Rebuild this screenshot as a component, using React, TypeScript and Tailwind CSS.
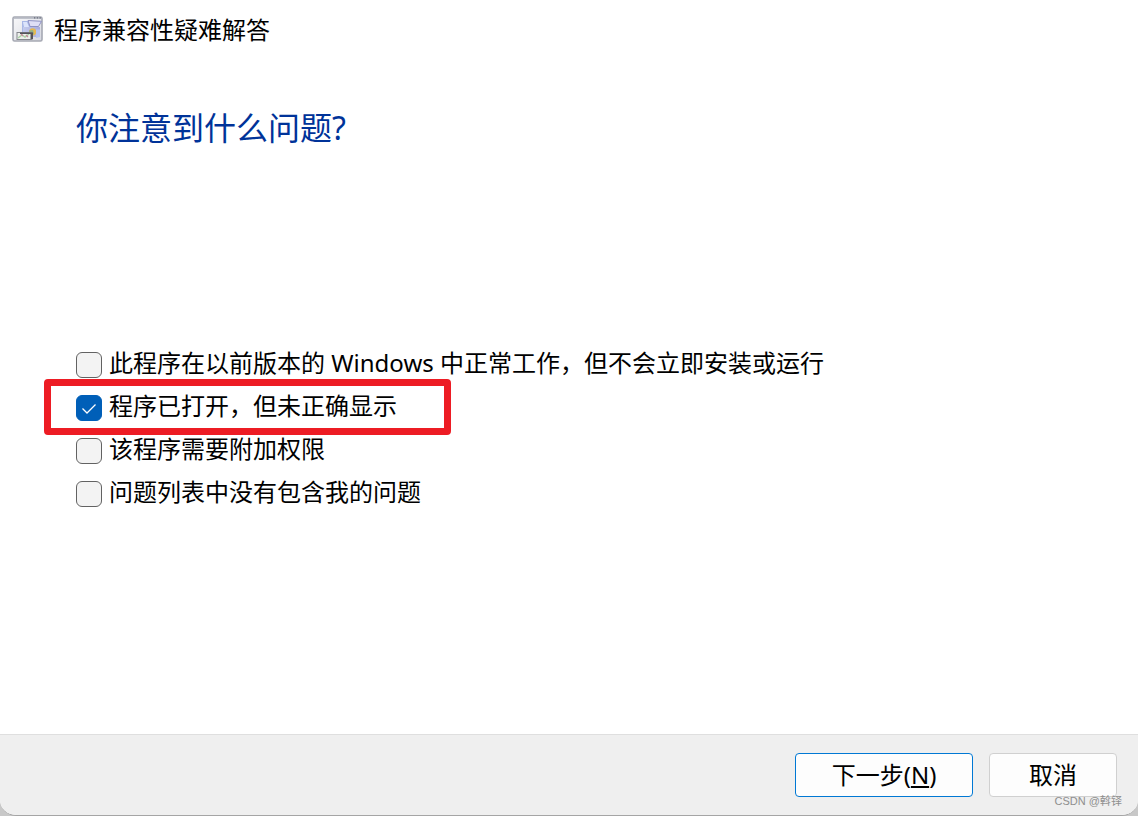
import { useState } from "react";

const PROBLEMS = [
  "此程序在以前版本的 Windows 中正常工作，但不会立即安装或运行",
  "程序已打开，但未正确显示",
  "该程序需要附加权限",
  "问题列表中没有包含我的问题",
];

function ProgramIcon() {
  return (
    <svg width="32" height="28" viewBox="0 0 32 28" aria-hidden="true" className="shrink-0">
      <defs>
        <linearGradient id="panel" x1="0" y1="0" x2="1" y2="1">
          <stop offset="0" stopColor="#f8f8fa" />
          <stop offset="1" stopColor="#d6d8e0" />
        </linearGradient>
        <linearGradient id="box" x1="0" y1="0" x2="1" y2="0">
          <stop offset="0" stopColor="#c3cbec" />
          <stop offset="1" stopColor="#a9acdd" />
        </linearGradient>
      </defs>
      <rect x="1" y="1" width="29" height="24" rx="1.5" fill="url(#panel)" stroke="#a6a9b3" strokeWidth="1.6" />
      <path d="M2 2h27" stroke="#b3b6c1" strokeWidth="1.6" />
      <path d="M22 1.8h1.3M24.800 1.8h1.3M27.500 1.8h1.3" stroke="#666a79" strokeWidth="1.2" />
      <path d="M10 5l8 0 2 6-8 0v8l-2-2z" fill="#a9b8e6" />
      <path d="M11 6l4 0 2 5-5 0z" fill="#dce4fb" />
      <path d="M11 11h17v10H11z" fill="url(#box)" />
      <path d="M16 4.500l13.500 .8-3 5.200H18z" fill="#dfdff6" stroke="#9093c4" strokeWidth="1" />
      <circle cx="20.700" cy="15.800" r="3.600" fill="#e5b952" />
      <path d="M17 14.500l4-.5 1 4-4 1z" fill="#92b189" />
      <path d="M24 13.500h4V21l-4 1z" fill="#b7c4ef" />
      <rect x="5" y="16.500" width="15" height="7" fill="#edf0ec" stroke="#85878d" strokeWidth="1" />
      <path d="M6 22l4-3 3 2 4-3" fill="none" stroke="#acd2a6" strokeWidth="1.500" />
      <path d="M9 18l2 2M14 19l2 2" stroke="#c8899b" strokeWidth="1.200" />
      <path d="M8 16.500h13V23h-2.500v-5H8z" fill="#55545a" />
    </svg>
  );
}

export default function App() {
  const [checked, setChecked] = useState([false, true, false, false]);
  const toggle = (index: number) =>
    setChecked((values) => values.map((value, i) => (i === index ? !value : value)));

  return (
    <div className="min-h-screen bg-[#c8c8c8] font-['Noto_Sans','Noto_Sans_CJK_SC',sans-serif] text-2xl text-black">
      <form
        className="flex min-h-screen flex-col overflow-hidden rounded-b-2xl border-b border-[#a5a5a5] bg-white"
        onSubmit={(event) => event.preventDefault()}
      >
        <header className="flex items-center gap-2.5 px-3 pt-3">
          <ProgramIcon />
          <span className="leading-9">程序兼容性疑难解答</span>
        </header>

        <main className="flex-1 px-[76px] pt-14">
          <h1 id="question" className="text-[32px] leading-12 text-[#003399]">你注意到什么问题?</h1>
          <fieldset aria-labelledby="question" className="mt-[191px]">
            {PROBLEMS.map((problem, index) => (
              <div key={problem} className="relative flex h-[43px] items-center">
                <label className="flex items-center gap-[7px] leading-9">
                  <span className="grid size-[26px] shrink-0">
                    <input
                      type="checkbox"
                      checked={checked[index]}
                      onChange={() => toggle(index)}
                      className="col-start-1 row-start-1 size-[26px] appearance-none rounded-md border border-[#626262] bg-[#f3f3f3] checked:border-[#005fb8] checked:bg-[#005fb8]"
                    />
                    {checked[index] && (
                      <svg viewBox="0 0 26 26" aria-hidden="true" className="pointer-events-none col-start-1 row-start-1 size-[26px]">
                        <path d="M6.500 13.500l4.500 4.500 8.500-8.500" fill="none" stroke="#fff" strokeWidth="1.300" />
                      </svg>
                    )}
                  </span>
                  <span className="pb-1">{problem}</span>
                </label>
                {index === 1 && (
                  <span className="pointer-events-none absolute -top-[7px] -left-8 h-14 w-[407px] rounded border-[7px] border-[#ed1c24]" />
                )}
              </div>
            ))}
          </fieldset>
        </main>

        <footer className="relative flex justify-end gap-4 border-t border-[#dfdfdf] bg-[#efefef] px-[21px] py-[18px]">
          <button type="submit" className="h-11 w-[178px] rounded border border-[#0078d4] bg-[#fdfdfd]">
            下一步(<span className="underline underline-offset-2">N</span>)
          </button>
          <button type="button" className="h-11 w-32 rounded border border-[#d0d0d0] bg-[#fdfdfd]">
            取消
          </button>
          <span className="pointer-events-none absolute right-4 bottom-1 font-['Liberation_Sans','Noto_Sans_CJK_SC',sans-serif] text-[11px] leading-5 text-[#8e8e8e]">
            CSDN @斡铎
          </span>
        </footer>
      </form>
    </div>
  );
}
